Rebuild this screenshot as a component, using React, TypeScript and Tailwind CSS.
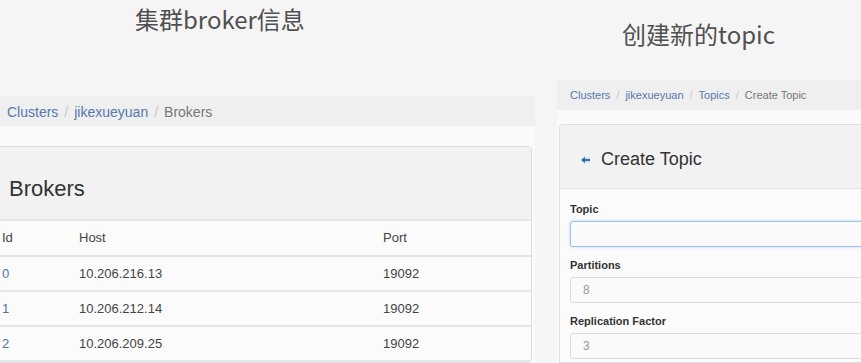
import React from "react";

const brokers = [
  { id: "0", host: "10.206.216.13", port: "19092" },
  { id: "1", host: "10.206.212.14", port: "19092" },
  { id: "2", host: "10.206.209.25", port: "19092" },
];

const sans = "font-['Liberation_Sans',Arial,sans-serif]";

function Sep() {
  return <span className="text-[#c8c8c8] px-[6px]">/</span>;
}

function Field({ label, value, focus }: { label: string; value?: string; focus?: boolean }) {
  return (
    <div className="flex flex-col">
      <div className="h-[16px] leading-[16px] text-[11px] font-bold text-[#333]">{label}</div>
      <div
        className={`mt-[4px] h-[26px] w-[320px] rounded-[3px] border bg-[#fafafa] pl-[12px] flex items-center text-[12px] text-[#999] ${
          focus ? "border-[#9fc3e6] shadow-[0_0_3px_rgba(102,175,233,0.5)]" : "border-[#dcdcdc]"
        }`}
      >
        {value}
      </div>
    </div>
  );
}

export default function App() {
  return (
    <div className={`w-[861px] h-[363px] bg-[#f5f5f5] overflow-hidden flex ${sans}`}>
      {/* left: brokers */}
      <div className="w-[535px] shrink-0 flex flex-col">
        <div className="pt-[1px] pl-[135px] h-[98px] text-[24px] leading-[36px] text-[#505050] font-['Noto_Sans_CJK_SC','Noto_Sans',sans-serif]">
          集群broker信息
        </div>
        <div className="h-[30px] bg-[#efefef] pl-[7px] pt-[2px] flex items-center text-[14px]">
          <span className="text-[#5479ad]">Clusters</span>
          <Sep />
          <span className="text-[#5479ad]">jikexueyuan</span>
          <Sep />
          <span className="text-[#777]">Brokers</span>
        </div>
        <div className="flex-1 bg-[#fafafa] pt-[20px]">
          <div className="-ml-[8px] w-[540px] border border-[#dedede] rounded-[4px] bg-[#fbfbfb] overflow-hidden">
            <div className="h-[74px] bg-[#f2f2f2] border-b-2 border-[#e6e6e6] pl-[16px] flex items-center text-[22px] text-[#333] pt-[10px]">
              Brokers
            </div>
            <div className="flex h-[36px] items-center border-b-2 border-[#e6e6e6] text-[13px] text-[#444]">
              <div className="w-[86px] pl-[9px]">Id</div>
              <div className="w-[304px]">Host</div>
              <div>Port</div>
            </div>
            {brokers.map((b) => (
              <div key={b.id} className="flex h-[35px] items-center border-b-2 border-[#e6e6e6] text-[13px] text-[#444]">
                <div className="w-[86px] pl-[9px] text-[#4a76ad]">{b.id}</div>
                <div className="w-[304px]">{b.host}</div>
                <div>{b.port}</div>
              </div>
            ))}
          </div>
        </div>
      </div>

      {/* right: create topic */}
      <div className="flex-1 flex flex-col">
        <div className="pt-[16px] pl-[87px] h-[80px] text-[24px] leading-[36px] text-[#505050] font-['Noto_Sans_CJK_SC','Noto_Sans',sans-serif]">
          创建新的topic
        </div>
        <div className="ml-[22px] flex-1 flex flex-col">
          <div className="h-[30px] bg-[#efefef] pl-[13px] pt-[1px] flex items-center text-[11px]">
            <span className="text-[#5479ad]">Clusters</span>
            <Sep />
            <span className="text-[#5479ad]">jikexueyuan</span>
            <Sep />
            <span className="text-[#5479ad]">Topics</span>
            <Sep />
            <span className="text-[#777]">Create Topic</span>
          </div>
          <div className="flex-1 bg-[#fafafa] pt-[14px] pl-[2px]">
            <div className="h-full border border-[#dedede] rounded-tl-[4px] border-r-0 bg-[#fbfbfb]">
              <div className="h-[64px] bg-[#f2f2f2] border-b border-[#e2e2e2] pl-[21px] pt-[6px] flex items-center text-[18px] text-[#333]">
                <svg width="9" height="8" viewBox="0 0 9 8" className="mr-[11px]">
                  <path d="M0 4 L4 0.5 L4 2.8 L9 2.8 L9 5.2 L4 5.2 L4 7.5 Z" fill="#3a74b0" />
                </svg>
                Create Topic
              </div>
              <div className="pl-[10px] pt-[12px] flex flex-col gap-[10px]">
                <Field label="Topic" focus />
                <Field label="Partitions" value="8" />
                <Field label="Replication Factor" value="3" />
              </div>
            </div>
          </div>
        </div>
      </div>
    </div>
  );
}
